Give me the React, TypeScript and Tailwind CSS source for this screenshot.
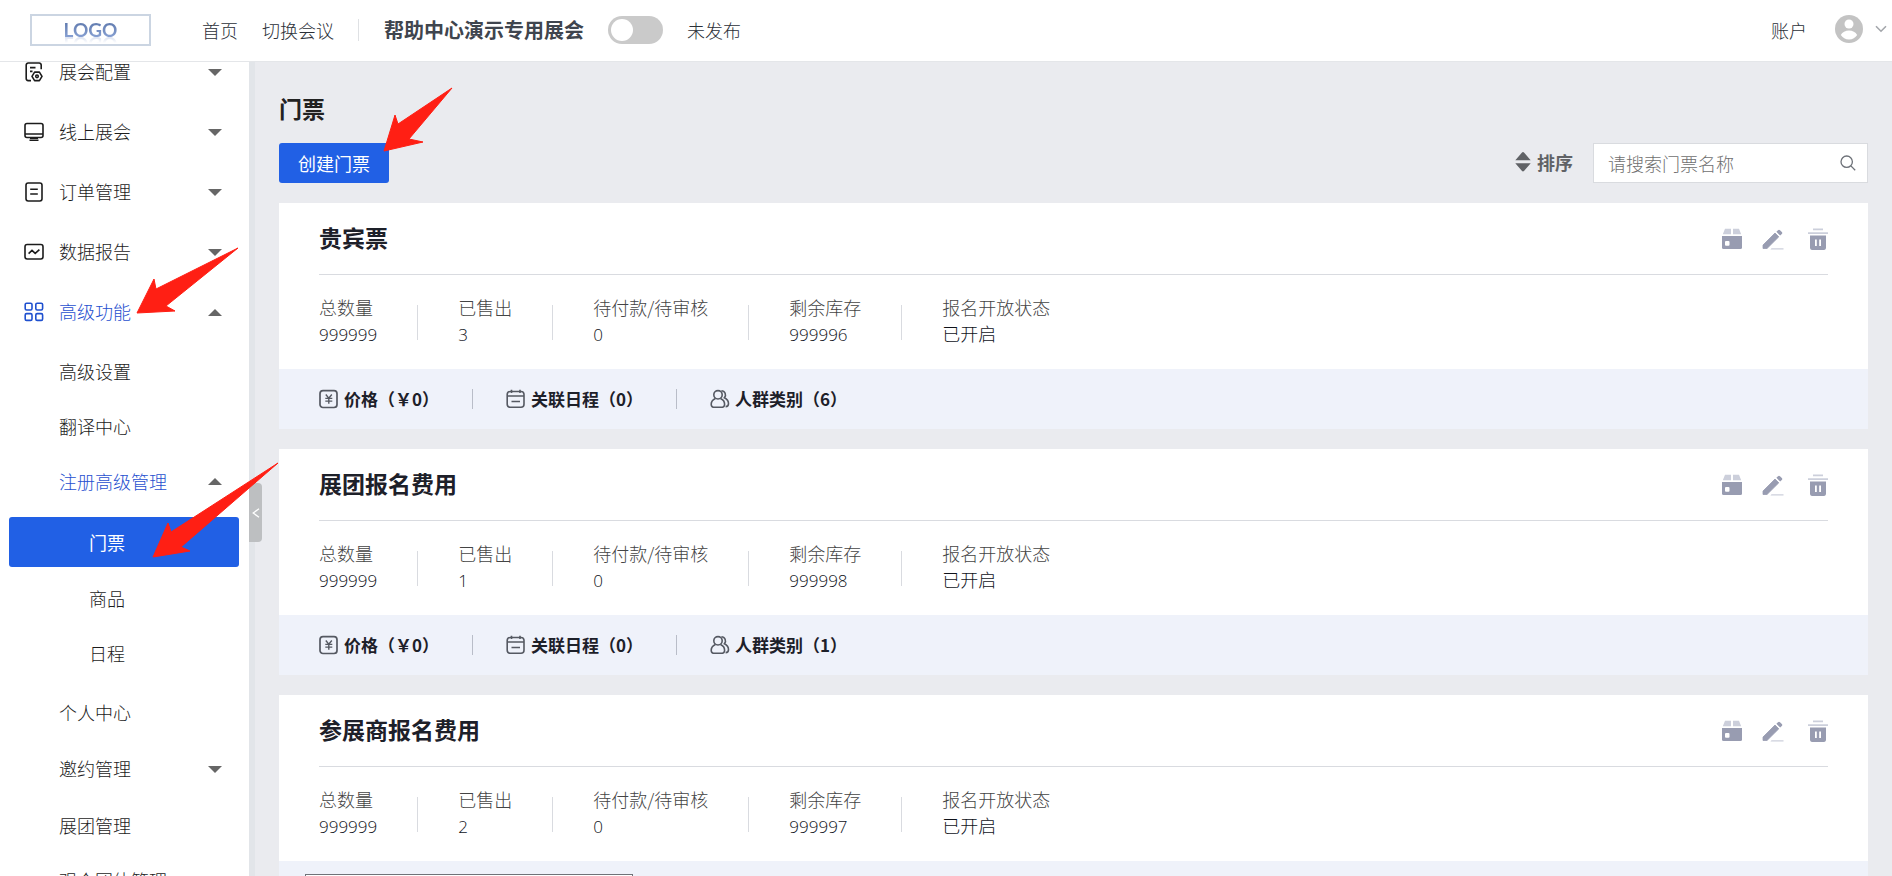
import React from "react";

type IconProps = { className?: string };

const ConfigIcon = ({ className }: IconProps) => (
  <svg viewBox="0 0 20 20" className={className} fill="none" stroke="currentColor" strokeWidth="1.6" aria-hidden="true">
    <path d="M7 18.6H4.2a2 2 0 0 1-2-2V3a2 2 0 0 1 2-2h11a2 2 0 0 1 2 2v4.2M6 5.6h5.5M6 9.4h2.5" />
    <path d="M10.6 10.1h4.8l2.6 4.2-2.6 4.3h-4.8L8 14.3z" strokeLinejoin="round" />
    <circle cx="13" cy="14.3" r="1.3" />
  </svg>
);

const OnlineIcon = ({ className }: IconProps) => (
  <svg viewBox="0 0 20 20" className={className} fill="none" stroke="currentColor" strokeWidth="1.6" aria-hidden="true">
    <rect x="1" y="1.5" width="18" height="14" rx="2" />
    <path d="M1 12h18M5.5 18.2h9" />
    <path d="M6 16.5h8" strokeWidth="1" />
  </svg>
);

const OrderIcon = ({ className }: IconProps) => (
  <svg viewBox="0 0 20 20" className={className} fill="none" stroke="currentColor" strokeWidth="1.6" aria-hidden="true">
    <rect x="2" y="1" width="16" height="18" rx="2.2" />
    <path d="M6.2 7.2h7.6M6.2 12h7.6" />
  </svg>
);

const ReportIcon = ({ className }: IconProps) => (
  <svg viewBox="0 0 20 20" className={className} fill="none" stroke="currentColor" strokeWidth="1.6" aria-hidden="true">
    <rect x="1" y="2.5" width="18" height="14.5" rx="2.2" />
    <path d="M4.6 11.6 8 8.4l3.2 3 4.2-3.8" />
  </svg>
);

const GridIcon = ({ className }: IconProps) => (
  <svg viewBox="0 0 20 20" className={className} fill="none" stroke="currentColor" strokeWidth="1.6" aria-hidden="true">
    <rect x="1.2" y="1.2" width="6.8" height="6.8" rx="1.4" />
    <rect x="11.8" y="1.2" width="6.8" height="6.8" rx="1.4" />
    <rect x="1.2" y="11.6" width="6.8" height="6.8" rx="1.4" />
    <rect x="11.8" y="11.6" width="6.8" height="6.8" rx="1.4" />
  </svg>
);

const Caret = ({ up = false }: { up?: boolean }) => (
  <svg viewBox="0 0 14 7" className="h-[7px] w-[14px] shrink-0 text-[#666]" fill="currentColor" aria-hidden="true">
    {up ? <path d="M0 7 7 0l7 7z" /> : <path d="M0 0h14L7 7z" />}
  </svg>
);

const BoxIcon = () => (
  <svg viewBox="0 0 20 22" className="h-[22px] w-5" aria-hidden="true">
    <path d="M3 .8h6v5.400H.8zM11 .8h6l2.200 5.400H11z" fill="#cccfdb" />
    <path d="M0 8h20v11.500a1.500 1.500 0 0 1-1.500 1.500h-17A1.500 1.500 0 0 1 0 19.500z" fill="#989cb1" />
    <rect x="3" y="13" width="4.500" height="4.800" rx="1" fill="#fff" />
  </svg>
);

const PencilIcon = () => (
  <svg viewBox="0 0 22 22" className="h-[22px] w-[22px]" aria-hidden="true">
    <path d="M1 20.500V17L13 5l3.800 3.800L5 20.500z" fill="#989cb1" stroke="#989cb1" strokeWidth=".8" strokeLinejoin="round" />
    <path d="m14.400 3.800 1.600-1.600a1.400 1.400 0 0 1 2 0l1.800 1.800a1.400 1.400 0 0 1 0 2L18.200 7.600z" fill="#989cb1" />
    <path d="M9.500 20.200h12v1.200h-13z" fill="#cccfdb" />
  </svg>
);

const TrashIcon = () => (
  <svg viewBox="0 0 20 22" className="h-[22px] w-5" aria-hidden="true">
    <path d="M5 .5h10v1.700H5zM0 4.200h20V6H0z" fill="#cccfdb" />
    <path d="M2 7.500h16v12.600a1.800 1.800 0 0 1-1.800 1.800H3.800A1.800 1.800 0 0 1 2 20.100z" fill="#989cb1" />
    <path d="M7 11.500h1.800v6.500H7zM11.200 11.500H13v6.500h-1.800z" fill="#fff" />
  </svg>
);

const PriceIcon = () => (
  <svg viewBox="0 0 20 20" className="size-5" fill="none" stroke="#555962" strokeWidth="1.7" aria-hidden="true">
    <rect x="1" y="1.700" width="17" height="16.800" rx="3" />
    <path d="m6.800 5.500 3 3.700 3-3.700M9.800 9.200v5.600M6.300 9.400h7M6.300 12.100h7" strokeWidth="1.400" />
  </svg>
);

const CalendarIcon = () => (
  <svg viewBox="0 0 20 20" className="size-5" fill="none" stroke="#555962" strokeWidth="1.600" aria-hidden="true">
    <rect x="1.200" y="2.500" width="16.800" height="15.800" rx="3" />
    <path d="M1.500 7h16.500M5.500 .8v3.200M14 .8v3.200M5.500 12.500h8.500" />
  </svg>
);

const PeopleIcon = () => (
  <svg viewBox="0 0 20 20" className="size-5" fill="none" stroke="#555962" strokeWidth="1.600" aria-hidden="true">
    <circle cx="8" cy="5.800" r="4.200" />
    <path d="M5.400 9.400C2.600 10.600 1.200 13 1.200 15.200c0 2.200 1.500 3.100 3.500 3.100h6.400c2 0 3.500-.9 3.500-3.100 0-2.200-1.300-4.600-4.100-5.800" />
    <path d="M11.400 1.700a4.200 4.200 0 0 1 3 7c2.600 1.200 4.100 3.600 4.100 6 0 1.800-.9 2.800-2.900 2.900" />
  </svg>
);

type NavEntry = {
  label: string;
  height: string;
  icon?: React.ComponentType<IconProps>;
  caret?: "up" | "down";
  active?: boolean;
};

const mainNav: NavEntry[] = [
  { label: "展会配置", height: "h-[60px]", icon: ConfigIcon, caret: "down" },
  { label: "线上展会", height: "h-[60px]", icon: OnlineIcon, caret: "down" },
  { label: "订单管理", height: "h-[60px]", icon: OrderIcon, caret: "down" },
  { label: "数据报告", height: "h-[60px]", icon: ReportIcon, caret: "down" },
  { label: "高级功能", height: "h-[60px]", icon: GridIcon, caret: "up", active: true },
];

const advancedNav: NavEntry[] = [
  { label: "高级设置", height: "h-[55px]" },
  { label: "翻译中心", height: "h-[55px]" },
  { label: "注册高级管理", height: "h-[55px]", caret: "up", active: true },
];

const moreNav: NavEntry[] = [
  { label: "个人中心", height: "h-[55px]" },
  { label: "邀约管理", height: "h-[58px]", caret: "down" },
  { label: "展团管理", height: "h-[55px]" },
  { label: "观众团体管理", height: "h-[55px]" },
];

const tickets = [
  { name: "贵宾票", sold: 3, left: 999996, groups: 6 },
  { name: "展团报名费用", sold: 1, left: 999998, groups: 1 },
  { name: "参展商报名费用", sold: 2, left: 999997, groups: 1 },
];

function NavRow({ entry }: { entry: NavEntry }) {
  const Icon = entry.icon;
  return (
    <button
      type="button"
      className={`flex w-full shrink-0 items-center pr-[27px] pl-6 text-left ${entry.height} ${entry.active ? "text-[#1f50cf]" : "text-[#1c1c1c]"}`}
    >
      <span className="w-[35px] shrink-0">{Icon && <Icon className="size-5" />}</span>
      <span className="flex-1 pb-0.5">{entry.label}</span>
      {entry.caret && <Caret up={entry.caret === "up"} />}
    </button>
  );
}

function Sidebar() {
  return (
    <nav className="flex w-[249px] shrink-0 flex-col overflow-hidden bg-white">
      <div className="-mt-5 flex flex-col">
        {mainNav.map((e) => (
          <NavRow key={e.label} entry={e} />
        ))}
        <div className="flex flex-col pt-0.5">
          {advancedNav.map((e) => (
            <NavRow key={e.label} entry={e} />
          ))}
        </div>
        <div className="flex flex-col pt-2 pr-[10px] pb-1 pl-[9px] text-[#1c1c1c]">
          <a href="#tickets" className="flex h-[50px] items-center rounded-[3px] bg-[#2160e5] pl-20 font-normal text-white">门票</a>
          <a href="#goods" className="mt-1 flex h-[55px] items-center pb-0.5 pl-20">商品</a>
          <a href="#schedule" className="flex h-[55px] items-center pb-0.5 pl-20">日程</a>
        </div>
        {moreNav.map((e) => (
          <NavRow key={e.label} entry={e} />
        ))}
      </div>
    </nav>
  );
}

function Header() {
  return (
    <header className="z-10 flex h-[62px] shrink-0 items-center border-b border-[#e4e6e9] bg-white pr-[5px] pb-0.5 pl-[30px] text-[#2b3038]">
      <div className="flex h-8 w-[121px] items-center justify-center border-2 border-[#cbd5e2] bg-white">
        <span className="bg-linear-to-b from-[#5a74a8] to-[#8fa8da] bg-clip-text font-['Lato',sans-serif] text-[19px] leading-5 font-bold text-transparent [-webkit-box-reflect:below_-6px_linear-gradient(transparent_55%,rgba(0,0,0,0.45))]">
          LOGO
        </span>
      </div>
      <a href="#home" className="ml-[51px]">首页</a>
      <a href="#switch" className="ml-6">切换会议</a>
      <span className="ml-6 h-[22px] w-px bg-[#dfe1e4]" />
      <strong className="ml-[25px] text-[20px] font-bold text-[#3f454e]">帮助中心演示专用展会</strong>
      <label className="ml-6 flex items-center">
        <input type="checkbox" className="peer sr-only" />
        <span className="flex h-7 w-[55px] items-center rounded-full bg-[#cacaca] px-[3px]">
          <span className="size-[22px] rounded-full bg-white" />
        </span>
        <span className="ml-6">未发布</span>
      </label>
      <a href="#account" className="ml-auto">账户</a>
      <button type="button" aria-label="用户菜单" className="ml-[28px] flex items-center gap-3 pb-0.5">
        <svg viewBox="0 0 28 28" className="size-7" aria-hidden="true">
          <circle cx="14" cy="14" r="14" fill="#c3c3c3" />
          <circle cx="14" cy="9" r="4.500" fill="#fff" />
          <path d="M5.800 20c1.600-3 4.600-4.600 8.200-4.600s6.600 1.600 8.200 4.600c-1.800 2.700-4.600 4.500-8.200 4.500S7.600 22.700 5.800 20z" fill="#fff" />
        </svg>
        <svg viewBox="0 0 12 8" className="h-2 w-3" fill="none" stroke="#a3a6ab" strokeWidth="1.600" aria-hidden="true">
          <path d="m1 1.200 5 5 5-5" />
        </svg>
      </button>
    </header>
  );
}

function Stat({ label, value }: { label: string; value: string | number }) {
  return (
    <div className="flex flex-col pb-1">
      <dt className="h-[26px] leading-[26px] text-[#444]">{label}</dt>
      <dd className="h-[26px] leading-[26px] text-[#0f121a]">
        {typeof value === "number" ? <span className="font-['Open_Sans',sans-serif] text-[17px]">{value}</span> : value}
      </dd>
    </div>
  );
}

const StatRule = () => <span className="h-[35px] w-px bg-[#d9dbe0]" />;
const FootRule = () => <span className="mx-[33px] h-5 w-px bg-[#b9bdc8]" />;

function TicketCard({ ticket }: { ticket: (typeof tickets)[number] }) {
  return (
    <article className="shrink-0 bg-white">
      <div className="flex h-[166px] flex-col px-10">
        <div className="flex h-[72px] shrink-0 items-center justify-between border-b border-[#d9dbe0]">
          <h2 className="pb-[3px] text-[23px] font-bold text-[#1d2029]">{ticket.name}</h2>
          <div className="flex items-center">
            <button type="button" aria-label="库存"><BoxIcon /></button>
            <button type="button" aria-label="编辑" className="ml-5"><PencilIcon /></button>
            <button type="button" aria-label="删除" className="ml-6"><TrashIcon /></button>
          </div>
        </div>
        <dl className="mt-[19px] flex items-center gap-10">
          <Stat label="总数量" value={999999} />
          <StatRule />
          <Stat label="已售出" value={ticket.sold} />
          <StatRule />
          <Stat label="待付款/待审核" value={0} />
          <StatRule />
          <Stat label="剩余库存" value={ticket.left} />
          <StatRule />
          <Stat label="报名开放状态" value="已开启" />
        </dl>
      </div>
      <div className="flex h-[60px] items-center bg-[#eff2fa] px-10 text-[17px] font-bold text-[#1d2029]">
        <a href="#price" className="flex items-center gap-[5px]"><PriceIcon />价格（￥0）</a>
        <FootRule />
        <a href="#agenda" className="flex items-center gap-[5px]"><CalendarIcon />关联日程（0）</a>
        <FootRule />
        <a href="#groups" className="flex items-center gap-[5px]"><PeopleIcon />人群类别（{ticket.groups}）</a>
      </div>
    </article>
  );
}

function Arrow({ className, viewBox, points }: { className: string; viewBox: string; points: string }) {
  return (
    <svg viewBox={viewBox} className={`pointer-events-none absolute z-20 ${className}`} aria-hidden="true">
      <polygon points={points} fill="#ff1f14" stroke="#ff1f14" strokeWidth="1" strokeLinejoin="round" />
    </svg>
  );
}

export default function App() {
  return (
    <div className="relative flex h-screen flex-col overflow-hidden bg-[#eaebef] font-['Noto_Sans_CJK_SC',sans-serif] text-[18px] leading-[26px] font-light text-[#333]">
      <Header />
      <div className="flex min-h-0 flex-1">
        <Sidebar />
        <div className="relative w-[6px] shrink-0 bg-[#e2e5e9]">
          <button type="button" aria-label="收起菜单" className="absolute top-[421px] left-0 flex h-[59px] w-[13px] items-center justify-center rounded-r-[4px] bg-[#bdbfc1]">
            <svg viewBox="0 0 8 10" className="h-[10px] w-2" fill="none" stroke="#fff" strokeWidth="1.300" aria-hidden="true">
              <path d="M7 .8 1.200 5 7 9.200" />
            </svg>
          </button>
        </div>
        <main className="flex min-w-0 flex-1 flex-col overflow-hidden px-6">
          <h1 className="mt-[30px] h-8 shrink-0 text-[23px] leading-8 font-bold text-[#222]">门票</h1>
          <div className="mt-[19px] flex h-10 shrink-0 items-center">
            <button type="button" className="h-10 w-[110px] rounded-[3px] bg-[#2160e5] font-normal text-white">创建门票</button>
            <button type="button" className="ml-auto flex items-center gap-1.5 pb-0.5 font-bold text-[#606266]">
              <svg viewBox="0 0 16 20" className="h-5 w-4" fill="currentColor" aria-hidden="true">
                <path d="M.3 8.200 6.800.8a1.600 1.600 0 0 1 2.400 0l6.500 7.400zM.3 11.300h15.400l-6.500 7.400a1.600 1.600 0 0 1-2.400 0z" />
              </svg>
              排序
            </button>
            <div className="ml-5 flex h-10 w-[275px] items-center border border-[#d9dbdf] bg-white pr-[11px] pl-[14px]">
              <input aria-label="搜索门票" placeholder="请搜索门票名称" className="min-w-0 flex-1 bg-transparent outline-none placeholder:text-[#707070]" />
              <svg viewBox="0 0 16 16" className="size-4" fill="none" stroke="#6d7178" strokeWidth="1.300" aria-hidden="true">
                <circle cx="6.700" cy="6.700" r="5.700" />
                <path d="m10.900 10.900 4.300 4.300" />
              </svg>
            </div>
          </div>
          <div className="mt-5 flex flex-col gap-5">
            {tickets.map((t) => (
              <TicketCard key={t.name} ticket={t} />
            ))}
          </div>
        </main>
      </div>
      <div className="absolute -bottom-6 left-[305px] z-10 h-[26px] w-[328px] border border-[#6f7278] bg-white" />
      <Arrow className="top-[87px] left-[383px] h-[66px] w-[72px]" viewBox="383 87 72 66" points="452,88 409,139 423,142 384,151 395,115 398,124" />
      <Arrow className="top-[247px] left-[136px] h-[68px] w-[104px]" viewBox="136 247 104 68" points="238,248 166,306 175,311 137,313 154,279 156,289" />
      <Arrow className="top-[462px] left-[152px] h-[97px] w-[128px]" viewBox="152 462 128 97" points="278,463 181,547 190,551 153,557 168,523 171,532" />
    </div>
  );
}
